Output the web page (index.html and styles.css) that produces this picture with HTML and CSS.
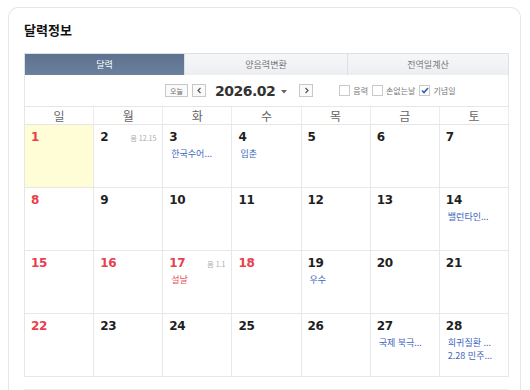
FILE: index.html
```html
<!DOCTYPE html>
<html lang="ko">
<head>
<meta charset="utf-8">
<link rel="stylesheet" href="styles.css">
</head>
<body>
<div class="card">
  <h2 class="title">달력정보</h2>
  <div class="tabs">
    <div class="tab active">달력</div>
    <div class="tab">양음력변환</div>
    <div class="tab">전역일계산</div>
  </div>
  <div class="controls">
    <div class="nav">
      <span class="btn today">오늘</span>
      <span class="btn arrow">
        <svg width="7" height="7" viewBox="0 0 7 7"><path d="M4.5 1 L2 3.5 L4.5 6" fill="none" stroke="#555" stroke-width="1.2"/></svg>
      </span>
      <span class="month">2026.02</span>
      <svg class="caret" width="6" height="4" viewBox="0 0 6 4"><path d="M0 0 H6 L3 3.5Z" fill="#666"/></svg>
      <span class="btn arrow">
        <svg width="7" height="7" viewBox="0 0 7 7"><path d="M2.5 1 L5 3.5 L2.5 6" fill="none" stroke="#555" stroke-width="1.2"/></svg>
      </span>
    </div>
    <div class="opts">
      <label class="opt"><span class="box"></span>음력</label>
      <label class="opt"><span class="box"></span>손없는날</label>
      <label class="opt"><span class="box checked"><svg width="8" height="7" viewBox="0 0 8 7"><path d="M1 3.5 L3 5.5 L7 1" fill="none" stroke="#2f5fb3" stroke-width="1.6"/></svg></span>기념일</label>
    </div>
  </div>
  <div class="cal">
    <div class="dow">일</div><div class="dow">월</div><div class="dow">화</div><div class="dow">수</div><div class="dow">목</div><div class="dow">금</div><div class="dow">토</div>

    <div class="cell today-cell"><div class="top"><span class="num red">1</span></div></div>
    <div class="cell"><div class="top"><span class="num">2</span><span class="lunar">음 12.15</span></div></div>
    <div class="cell"><div class="top"><span class="num">3</span></div><div class="ev">한국수어...</div></div>
    <div class="cell"><div class="top"><span class="num">4</span></div><div class="ev">입춘</div></div>
    <div class="cell"><div class="top"><span class="num">5</span></div></div>
    <div class="cell"><div class="top"><span class="num">6</span></div></div>
    <div class="cell"><div class="top"><span class="num">7</span></div></div>

    <div class="cell"><div class="top"><span class="num red">8</span></div></div>
    <div class="cell"><div class="top"><span class="num">9</span></div></div>
    <div class="cell"><div class="top"><span class="num">10</span></div></div>
    <div class="cell"><div class="top"><span class="num">11</span></div></div>
    <div class="cell"><div class="top"><span class="num">12</span></div></div>
    <div class="cell"><div class="top"><span class="num">13</span></div></div>
    <div class="cell"><div class="top"><span class="num">14</span></div><div class="ev">밸런타인...</div></div>

    <div class="cell"><div class="top"><span class="num red">15</span></div></div>
    <div class="cell"><div class="top"><span class="num red">16</span></div></div>
    <div class="cell"><div class="top"><span class="num red">17</span><span class="lunar">음 1.1</span></div><div class="ev red">설날</div></div>
    <div class="cell"><div class="top"><span class="num red">18</span></div></div>
    <div class="cell"><div class="top"><span class="num">19</span></div><div class="ev">우수</div></div>
    <div class="cell"><div class="top"><span class="num">20</span></div></div>
    <div class="cell"><div class="top"><span class="num">21</span></div></div>

    <div class="cell"><div class="top"><span class="num red">22</span></div></div>
    <div class="cell"><div class="top"><span class="num">23</span></div></div>
    <div class="cell"><div class="top"><span class="num">24</span></div></div>
    <div class="cell"><div class="top"><span class="num">25</span></div></div>
    <div class="cell"><div class="top"><span class="num">26</span></div></div>
    <div class="cell"><div class="top"><span class="num">27</span></div><div class="ev">국제 북극...</div></div>
    <div class="cell"><div class="top"><span class="num">28</span></div><div class="ev">희귀질환 ...</div><div class="ev">2.28 민주...</div></div>
  </div>
  <div class="below"></div>
</div>
</body>
</html>
```

FILE: styles.css
```css
* { box-sizing: border-box; }
html, body { margin: 0; padding: 0; background: #fff; }
body {
  font-family: "Noto Sans CJK KR", "Noto Sans", sans-serif;
  color: #222;
  height: 390px;
  overflow: hidden;
}
.card {
  margin: 7px 0 0 8px;
  width: 513px;
  height: 383px;
  border: 1px solid #e6e6e6;
  border-bottom: none;
  border-radius: 10px 10px 0 0;
  padding: 13px 12px 0 15px;
}
.title {
  margin: 0;
  font-size: 13px;
  font-weight: 700;
  line-height: 18px;
  color: #111;
}
.tabs {
  margin-top: 14px;
  width: 485px;
  display: flex;
  border: 1px solid #dde1e6;
  border-bottom: none;
  height: 22px;
}
.tab {
  flex: 1;
  text-align: center;
  font-size: 9px;
  line-height: 21px;
  color: #777;
  background: linear-gradient(#f6f7f9, #eceef1);
  border-left: 1px solid #dde1e6;
}
.tab:first-child { border-left: none; }
.tab.active {
  background: linear-gradient(#5d7290, #6b809c);
  color: #fff;
  flex: 0 0 159px;
}
.tab:nth-child(2) { flex: 0 0 163px; }
.controls {
  width: 485px;
  height: 31px;
  border-left: 1px solid #e6e6e6;
  border-right: 1px solid #e6e6e6;
  display: flex;
  align-items: center;
}
.nav {
  display: flex;
  align-items: center;
  margin-left: 140px;
}
.btn {
  display: inline-flex;
  align-items: center;
  justify-content: center;
  height: 13px;
  border: 1px solid #c8c8c8;
  background: #fafafa;
  font-size: 7px;
  color: #666;
}
.today { width: 23px; }
.arrow { width: 14px; margin-left: 4px; }
.month {
  font-family: "DejaVu Sans", sans-serif;
  font-weight: 700;
  font-size: 14px;
  color: #333;
  margin-left: 9px;
  letter-spacing: -0.5px;
}
.caret { margin-left: 6px; margin-right: 8px; margin-top: 2px; }
.opts {
  display: flex;
  align-items: center;
  margin-left: 26px;
}
.opt {
  display: flex;
  align-items: center;
  font-size: 8px;
  color: #777;
  margin-right: 4px;
}
.box {
  display: inline-flex;
  align-items: center;
  justify-content: center;
  width: 11px;
  height: 11px;
  border: 1px solid #c9c9c9;
  background: #fff;
  margin-right: 3px;
}
.cal {
  width: 485px;
  display: grid;
  grid-template-columns: repeat(7, 1fr);
  grid-template-rows: 18px repeat(4, 63px);
  border-left: 1px solid #e6e6e6;
  border-top: 1px solid #e6e6e6;
}
.dow {
  text-align: center;
  font-size: 12px;
  line-height: 17px;
  color: #666;
  border-right: 1px solid #ececec;
  border-bottom: 1px solid #e6e6e6;
}
.cell {
  border-right: 1px solid #e8e8e8;
  border-bottom: 1px solid #e8e8e8;
  padding: 4px 6px 0 6px;
}
.today-cell { background: #fffdd6; }
.top {
  display: flex;
  justify-content: space-between;
  align-items: center;
  height: 16px;
}
.num {
  font-family: "DejaVu Sans", sans-serif;
  font-weight: 700;
  font-size: 12px;
  letter-spacing: -0.3px;
  color: #1f1f1f;
}
.num.red { color: #e8404d; }
.lunar {
  font-size: 7px;
  color: #aaa;
  margin-top: 2px;
}
.ev {
  font-size: 9px;
  line-height: 13px;
  color: #3d66c0;
  padding-left: 2px;
  margin-top: 2px;
  white-space: nowrap;
}
.ev + .ev { margin-top: 0; }
.ev.red { color: #e8505a; }
.below {
  margin-top: 12px;
  width: 485px;
  height: 1px;
  border-top: 1px solid #ededed;
}
```
